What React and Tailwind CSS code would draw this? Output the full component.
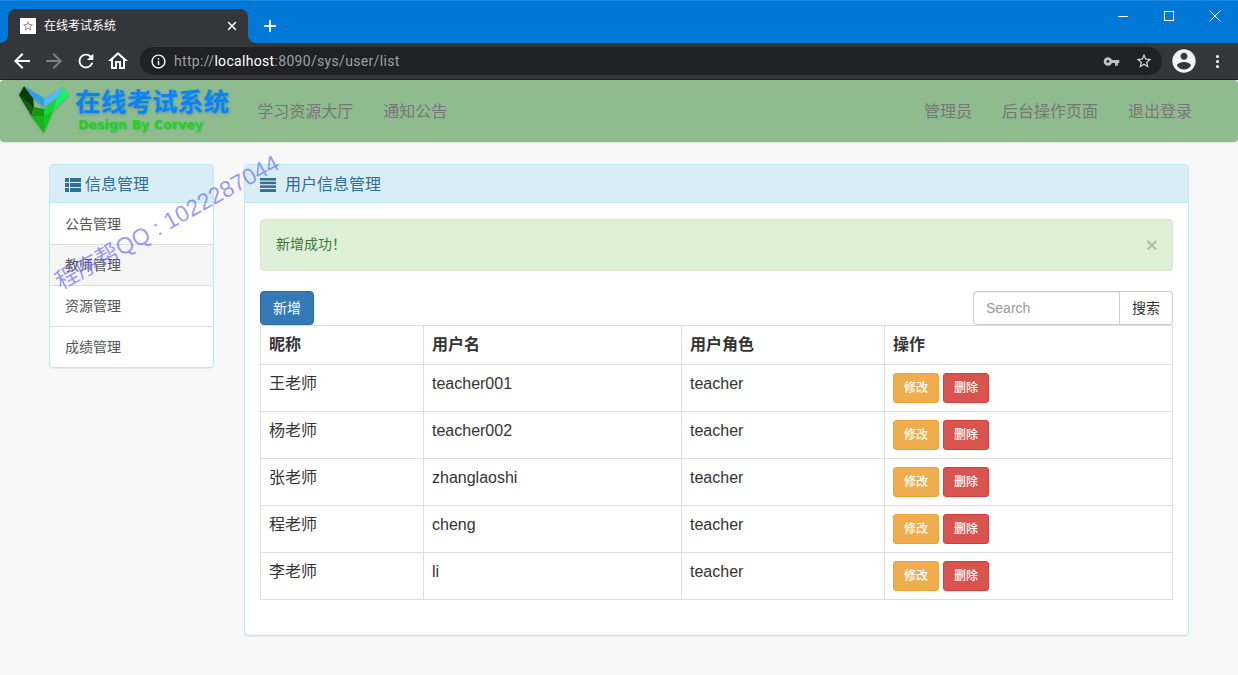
import { X, Plus } from 'lucide-react';

const users = [
    { nick: '王老师', name: 'teacher001' },
    { nick: '杨老师', name: 'teacher002' },
    { nick: '张老师', name: 'zhanglaoshi' },
    { nick: '程老师', name: 'cheng' },
    { nick: '李老师', name: 'li' },
];

const sideItems = ['公告管理', '教师管理', '资源管理', '成绩管理'];

function Md({ d, className }) {
    return (
        <svg viewBox="0 0 24 24" fill="currentColor" className={className}>
            <path d={d} />
        </svg>
    );
}

function BrowserChrome() {
    return (
        <div className="h-[80px] shrink-0 font-['Roboto','Noto_Sans_CJK_SC',sans-serif]">
            <div className="h-[43px] bg-[#0078d7] border-t border-t-[#1a86dd] flex items-end pl-2 relative">
                <div className="relative w-[240px] h-[34px] bg-[#35363a] rounded-t-lg flex items-center pl-3 pr-2 text-white">
                    {/* inverse corners at the foot of the tab */}
                    <div className="absolute -left-2 bottom-0 w-2 h-2 bg-[#35363a]">
                        <div className="w-2 h-2 bg-[#0078d7] rounded-br-lg" />
                    </div>
                    <div className="absolute -right-2 bottom-0 w-2 h-2 bg-[#35363a]">
                        <div className="w-2 h-2 bg-[#0078d7] rounded-bl-lg" />
                    </div>
                    <div className="w-4 h-4 bg-white flex items-center justify-center">
                        <Md className="w-3 h-3 text-[#8a7a80]" d="M22 9.24l-7.19-.62L12 2 9.19 8.63 2 9.24l5.46 4.73L5.82 21 12 17.27 18.18 21l-1.63-7.03L22 9.24zM12 15.4l-3.76 2.27 1-4.28-3.32-2.88 4.38-.38L12 6.1l1.71 4.04 4.38.38-3.32 2.88 1 4.28L12 15.4z" />
                    </div>
                    <span className="ml-2 text-xs flex-1">在线考试系统</span>
                    <X size={14} strokeWidth={2.5} className="mr-[1px]" />
                </div>
                <div className="h-[34px] flex items-center ml-[13px] text-white">
                    <Plus size={18} strokeWidth={2.5} />
                </div>
                <div className="absolute right-0 top-0 h-[30px] flex items-center text-white">
                    <div className="w-[46px] flex justify-center"><div className="w-[10px] h-px bg-white" /></div>
                    <div className="w-[46px] flex justify-center"><div className="w-[10px] h-[10px] border border-white" /></div>
                    <div className="w-[46px] flex justify-center"><X size={20} strokeWidth={1.2} /></div>
                </div>
            </div>
            <div className="h-[36px] bg-[#35363a] flex items-center pl-[10px] pr-[9px] text-white">
                <Md className="w-6 h-6 mr-2" d="M20 11H7.83l5.59-5.59L12 4l-8 8 8 8 1.41-1.41L7.83 13H20v-2z" />
                <Md className="w-6 h-6 mr-2 text-[#7e8083]" d="M12 4l-1.41 1.41L16.17 11H4v2h12.17l-5.58 5.59L12 20l8-8z" />
                <Md className="w-[22px] h-[22px] mr-[9px] ml-[1px]" d="M17.65 6.35C16.2 4.9 14.21 4 12 4c-4.42 0-7.99 3.58-7.99 8s3.57 8 7.99 8c3.73 0 6.84-2.55 7.73-6h-2.08c-.82 2.33-3.04 4-5.65 4-3.31 0-6-2.69-6-6s2.69-6 6-6c1.66 0 3.14.69 4.22 1.78L13 11h7V4l-2.35 2.35z" />
                <Md className="w-6 h-6 mr-[10px]" d="M12 5.69l5 4.5V18h-2v-6H9v6H7v-7.81l5-4.5M12 3L2 12h3v8h6v-6h2v6h6v-8h3L12 3z" />
                <div className="flex-1 h-7 bg-[#202124] rounded-full flex items-center pl-[10px] pr-[9px]">
                    <Md className="w-[17px] h-[17px] mr-[7px]" d="M11 7h2v2h-2zm0 4h2v6h-2zm1-9C6.48 2 2 6.48 2 12s4.48 10 10 10 10-4.48 10-10S17.52 2 12 2zm0 18c-4.41 0-8-3.59-8-8s3.59-8 8-8 8 3.59 8 8-3.59 8-8 8z" />
                    <span className="text-sm text-[#9aa0a6] flex-1 tracking-[0.32px]">
                        http://<span className="text-white">localhost</span>:8090/sys/user/list
                    </span>
                    <Md className="w-[17px] h-[17px] text-[#c0c2c5] mr-[15px]" d="M12.65 10C11.83 7.67 9.61 6 7 6c-3.31 0-6 2.69-6 6s2.69 6 6 6c2.61 0 4.83-1.67 5.65-4H17v4h4v-4h2v-4H12.65zM7 14c-1.1 0-2-.9-2-2s.9-2 2-2 2 .9 2 2-.9 2-2 2z" />
                    <Md className="w-[18px] h-[18px] text-[#d5d6d8]" d="M22 9.24l-7.19-.62L12 2 9.19 8.63 2 9.24l5.46 4.73L5.82 21 12 17.27 18.18 21l-1.63-7.03L22 9.24zM12 15.4l-3.76 2.27 1-4.28-3.32-2.88 4.38-.38L12 6.1l1.71 4.04 4.38.38-3.32 2.88 1 4.28L12 15.4z" />
                </div>
                <Md className="w-7 h-7 ml-2 text-[#f1f3f4]" d="M12 2C6.48 2 2 6.48 2 12s4.48 10 10 10 10-4.48 10-10S17.52 2 12 2zm0 3c1.66 0 3 1.34 3 3s-1.34 3-3 3-3-1.34-3-3 1.34-3 3-3zm0 14.2c-2.5 0-4.71-1.28-6-3.22.03-1.99 4-3.08 6-3.08 1.99 0 5.97 1.09 6 3.08-1.29 1.94-3.5 3.22-6 3.22z" />
                <div className="ml-[18px] mr-[10px] flex flex-col gap-[2px]">
                    <div className="w-[3px] h-[3px] rounded-full bg-white" />
                    <div className="w-[3px] h-[3px] rounded-full bg-white" />
                    <div className="w-[3px] h-[3px] rounded-full bg-white" />
                </div>
            </div>
            <div className="h-px bg-[#1d1e20]" />
        </div>
    );
}

function Logo() {
    return (
        <svg viewBox="0 0 50 48" className="w-[50px] h-[48px] drop-shadow-[0_1px_1px_rgba(0,0,0,0.2)]">
            <polygon points="5,0 0,9 9,24 15,21 14,12" fill="#0c3a08" />
            <polygon points="0,9 9,24 12,30 15,21" fill="#145c0e" />
            <polygon points="5,0 25,12 25,21 14,12" fill="#2aa0e8" />
            <polygon points="25,12 44,1 38,12 25,21" fill="#55b8f0" />
            <polygon points="15,21 25,23 25,30 12,30" fill="#109a14" />
            <polygon points="12,30 25,30 25,47" fill="#16b31a" />
            <polygon points="25,23 38,12 34,25 25,30" fill="#14d83a" />
            <polygon points="25,30 34,25 25,47" fill="#12c42a" />
            <polygon points="44,1 50,9 34,25 38,12" fill="#18f06a" />
        </svg>
    );
}

function Navbar() {
    return (
        <div className="h-[62px] shrink-0 bg-[#8fbc8f] rounded-[4px] flex shadow-[0_1px_2px_rgba(0,0,0,0.1)] text-base text-[#777]">
            <div className="pl-[19px] pt-[6px] flex items-start">
                <Logo />
                <div className="ml-[6px] mt-[1px]">
                    <div className="text-[25.5px] leading-[31px] font-bold text-[#0a84f5] [text-shadow:1px_1px_3px_rgba(10,100,220,0.5)] tracking-[0.2px]">在线考试系统</div>
                    <div className="text-[12.5px] leading-[14px] font-bold text-[#12d81e] ml-[3px] tracking-[0.1px] font-['DejaVu_Sans',sans-serif] [text-shadow:1px_1px_2px_rgba(0,0,0,0.15)]">Design By Corvey</div>
                </div>
            </div>
            <div className="flex items-center gap-[30px] ml-[28px] mt-[1px]">
                <span>学习资源大厅</span>
                <span>通知公告</span>
            </div>
            <div className="flex items-center gap-[30px] ml-auto mr-[46px] mt-[1px]">
                <span>管理员</span>
                <span>后台操作页面</span>
                <span>退出登录</span>
            </div>
        </div>
    );
}

function Sidebar() {
    return (
        <div className="w-[165px] shrink-0 self-start bg-white border border-[#bce8f1] rounded-[4px] shadow-[0_1px_1px_rgba(0,0,0,0.05)]">
            <div className="h-[38px] pt-[2px] bg-[#d9edf7] border-b border-[#bce8f1] rounded-t-[3px] flex items-center pl-[15px] text-base text-[#31708f]">
                <svg viewBox="0 0 16 14" fill="currentColor" className="w-4 h-[14px] mr-[4px]">
                    <rect x="0" y="0" width="4" height="4" />
                    <rect x="5" y="0" width="11" height="4" />
                    <rect x="0" y="5" width="4" height="4" />
                    <rect x="5" y="5" width="11" height="4" />
                    <rect x="0" y="10" width="4" height="4" />
                    <rect x="5" y="10" width="11" height="4" />
                </svg>
                信息管理
            </div>
            {sideItems.map((item, i) => (
                <div
                    key={item}
                    className={`h-[41px] flex items-center pl-[15px] text-sm text-[#555] ${i > 0 ? 'border-t border-[#ddd]' : ''} ${i === 1 ? 'bg-[#f5f5f5]' : ''}`}
                >
                    {item}
                </div>
            ))}
        </div>
    );
}

function UserTable() {
    return (
        <table className="w-[913px] table-fixed border-collapse border border-[#ddd] text-base text-[#333]">
            <thead>
                <tr className="h-[39px]">
                    <th className="w-[163px] border border-[#ddd] px-2 text-left font-bold">昵称</th>
                    <th className="w-[258px] border border-[#ddd] px-2 text-left font-bold">用户名</th>
                    <th className="w-[203px] border border-[#ddd] px-2 text-left font-bold">用户角色</th>
                    <th className="border border-[#ddd] px-2 text-left font-bold">操作</th>
                </tr>
            </thead>
            <tbody>
                {users.map((u) => (
                    <tr key={u.name} className="h-[47px]">
                        <td className="border border-[#ddd] px-2 py-2 align-top leading-[21px]">{u.nick}</td>
                        <td className="border border-[#ddd] px-2 py-2 align-top leading-[21px]">{u.name}</td>
                        <td className="border border-[#ddd] px-2 py-2 align-top leading-[21px]">teacher</td>
                        <td className="border border-[#ddd] px-2 py-2 align-top">
                            <div className="flex gap-1">
                                <button className="w-[46px] h-[30px] text-xs font-medium text-white bg-[#f0ad4e] border border-[#eea236] rounded-[3px]">修改</button>
                                <button className="w-[46px] h-[30px] text-xs font-medium text-white bg-[#d9534f] border border-[#d43f3a] rounded-[3px]">删除</button>
                            </div>
                        </td>
                    </tr>
                ))}
            </tbody>
        </table>
    );
}

function MainPanel() {
    return (
        <div className="w-[945px] h-[472px] shrink-0 bg-white border border-[#bce8f1] rounded-[4px] shadow-[0_1px_1px_rgba(0,0,0,0.05)]">
            <div className="h-[38px] pt-[2px] bg-[#d9edf7] border-b border-[#bce8f1] rounded-t-[3px] flex items-center pl-[15px] text-base text-[#31708f]">
                <svg viewBox="0 0 16 14" fill="currentColor" className="w-4 h-[14px] mr-[9px]">
                    <rect x="0" y="0" width="16" height="2.5" />
                    <rect x="0" y="3.7" width="16" height="2.5" />
                    <rect x="0" y="7.4" width="16" height="2.5" />
                    <rect x="0" y="11.1" width="16" height="2.9" />
                </svg>
                用户信息管理
            </div>
            <div className="px-[15px] pt-[16px]">
                <div className="h-[52px] pb-[2px] bg-[#dff0d8] border border-[#d6e9c6] rounded-[4px] flex items-center justify-between pl-[15px] pr-[14px] text-sm text-[#3c763d]">
                    <span>新增成功！</span>
                    <span className="text-[21px] font-bold leading-none text-black opacity-20">×</span>
                </div>
                <div className="flex items-center justify-between mt-[20px]">
                    <button className="w-[54px] h-[34px] text-sm text-white bg-[#337ab7] border border-[#2e6da4] rounded-[4px]">新增</button>
                    <div className="flex h-[34px]">
                        <input
                            placeholder="Search"
                            className="w-[147px] border border-[#ccc] rounded-l-[4px] px-3 text-sm text-[#555] placeholder:text-[#999] shadow-[inset_0_1px_1px_rgba(0,0,0,0.075)] outline-none"
                        />
                        <button className="w-[53px] border border-l-0 border-[#ccc] rounded-r-[4px] text-sm text-[#333] bg-white">搜索</button>
                    </div>
                </div>
                <UserTable />
            </div>
        </div>
    );
}

export default function App() {
    return (
        <div className="relative w-full h-[675px] overflow-hidden flex flex-col bg-[#f8f8f8] font-['Liberation_Sans','Noto_Sans_CJK_SC',sans-serif]">
            <BrowserChrome />
            <Navbar />
            <div className="flex items-start gap-[30px] pl-[49px] pt-[22px]">
                <Sidebar />
                <MainPanel />
            </div>
            <div className="absolute left-[41px] top-[209px] text-[23px] leading-[26px] text-[rgba(90,90,240,0.6)] whitespace-nowrap -rotate-[29deg]">
                程序帮QQ : 1022287044
            </div>
        </div>
    );
}
